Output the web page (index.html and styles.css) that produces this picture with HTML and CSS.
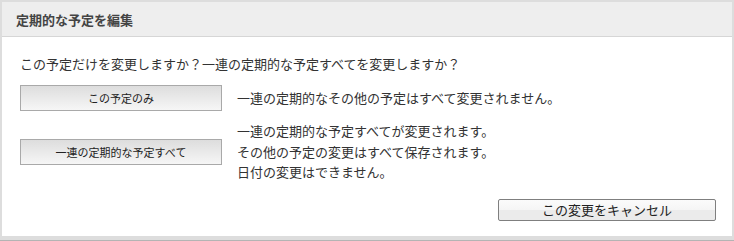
FILE: index.html
```html
<!DOCTYPE html>
<html lang="ja">
<head>
<meta charset="utf-8">
<title>定期的な予定を編集</title>
<link rel="stylesheet" href="styles.css">
</head>
<body>
<div class="dialog">
  <div class="header">定期的な予定を編集</div>
  <div class="content">
    <p class="question">この予定だけを変更しますか？一連の定期的な予定すべてを変更しますか？</p>
    <div class="row row-first">
      <button class="choice">この予定のみ</button>
      <div class="desc">一連の定期的なその他の予定はすべて変更されません。</div>
    </div>
    <div class="row row-second">
      <button class="choice">一連の定期的な予定すべて</button>
      <div class="desc">一連の定期的な予定すべてが変更されます。<br>その他の予定の変更はすべて保存されます。<br>日付の変更はできません。</div>
    </div>
    <div class="footer">
      <button class="cancel">この変更をキャンセル</button>
    </div>
  </div>
</div>
</body>
</html>
```
FILE: styles.css
```css
html, body {
  margin: 0;
  padding: 0;
}
body {
  width: 734px;
  height: 241px;
  box-sizing: border-box;
  padding: 2px 2px 0 2px;
  background: linear-gradient(to bottom, #dddddd 0, #dddddd 240px, #b4b4b4 240px);
  font-family: "Noto Sans CJK JP", "Noto Sans", sans-serif;
  color: #333;
  overflow: hidden;
}
.dialog {
  background: #fff;
  height: 234px;
  display: flex;
  flex-direction: column;
}
.header {
  height: 34px;
  box-sizing: border-box;
  background: #eeeeee;
  border-bottom: 1px solid #d6d6d6;
  padding-left: 14px;
  display: flex;
  align-items: center;
  font-size: 13px;
  font-weight: bold;
  color: #444;
  height: 35px;
}
.content {
  padding: 17px 16px 0 18px;
  display: flex;
  flex-direction: column;
}
.question {
  margin: 0 0 11px 0;
  font-size: 13px;
  line-height: 20px;
}
.row {
  display: flex;
  align-items: center;
  gap: 15px;
}
.row-second {
  margin-top: 10px;
}
.desc {
  font-size: 13px;
  line-height: 20.5px;
}
.choice {
  width: 202px;
  height: 26px;
  box-sizing: border-box;
  margin: 0;
  padding: 0;
  border: 1px solid #a9a9a9;
  border-radius: 0;
  background: linear-gradient(to bottom, #dddddd, #f6f6f6);
  font-family: "Noto Sans CJK JP", sans-serif;
  font-size: 11px;
  color: #222;
  flex: none;
}
.footer {
  display: flex;
  justify-content: flex-end;
  margin-top: 16px;
}
.cancel {
  width: 218px;
  height: 22px;
  box-sizing: border-box;
  margin: 0;
  padding: 0;
  border: 1px solid #7f7f7f;
  border-radius: 2px;
  background: linear-gradient(to bottom, #fbfbfb 0, #f5f5f5 50%, #ebebeb 50%, #ebebeb 100%);
  font-family: "Noto Sans CJK JP", sans-serif;
  font-size: 13px;
  color: #222;
}
```
